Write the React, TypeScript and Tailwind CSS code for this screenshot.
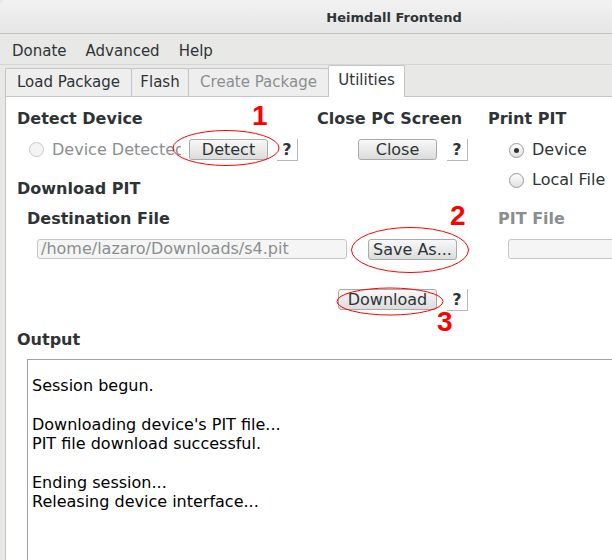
import type { ReactNode } from "react";

function Btn({ className, children }: { className: string; children: ReactNode }) {
  return (
    <div
      className={`flex h-[21px] items-center justify-center rounded-[3px] border border-[#a9a9a9] bg-linear-to-b from-[#f8f8f8] to-[#dcdcdc] text-[16px] leading-none text-[#2e3436] ${className}`}
    >
      {children}
    </div>
  );
}

function Help({ className }: { className: string }) {
  return (
    <div
      className={`flex h-[22px] w-[21px] items-center justify-center border-r border-b border-[#b8b8b8] bg-white text-[16px] font-bold leading-none text-[#2e3436] ${className}`}
    >
      ?
    </div>
  );
}

function Radio({ checked, disabled, className }: { checked?: boolean; disabled?: boolean; className: string }) {
  return (
    <span
      className={`flex h-[15px] w-[15px] shrink-0 items-center justify-center rounded-full border ${
        disabled ? "border-[#c8c8c8] bg-[#f4f4f4]" : "border-[#9a9a9a] bg-linear-to-b from-[#fdfdfd] to-[#e2e2e2]"
      } ${className}`}
    >
      {checked && <span className="h-[5px] w-[5px] rounded-full bg-[#2e3436]" />}
    </span>
  );
}

function Heading({ children, className = "" }: { children: ReactNode; className?: string }) {
  return <div className={`h-[20px] whitespace-nowrap text-[16px] font-bold leading-[20px] ${className}`}>{children}</div>;
}

const output = [
  "Session begun.",
  "",
  "Downloading device's PIT file...",
  "PIT file download successful.",
  "",
  "Ending session...",
  "Releasing device interface...",
];

export default function App() {
  return (
    <div className="relative h-[560px] w-[612px] overflow-hidden bg-[#e8e8e7] font-['DejaVu_Sans',sans-serif] text-[#2e3436]">
      <div className="flex w-[788px] flex-col">
        {/* Title bar */}
        <div className="flex h-[34px] items-center justify-center rounded-tl-[6px] border-b border-[#c2c2c2] bg-linear-to-b from-[#f2f2f2] to-[#e6e6e6] pt-[2px] text-[13px] font-bold">
          Heimdall Frontend
        </div>

        {/* Menu */}
        <div className="flex h-[31px] items-center gap-[19px] border-b border-[#d6d6d6] pt-[4px] pl-[12px] text-[15px]">
          <span>Donate</span>
          <span>Advanced</span>
          <span>Help</span>
        </div>

        {/* Tabs + panel */}
        <div className="ml-[5px] flex flex-col">
          <div className="flex h-[31px] items-end text-[15px]">
            <div className="flex h-[28px] w-[127px] items-center justify-center rounded-t-[2px] border border-b-0 border-[#c4c4c4] bg-[#eeeeee]">
              Load Package
            </div>
            <div className="-ml-px flex h-[28px] w-[58px] items-center justify-center rounded-t-[2px] border border-b-0 border-[#c4c4c4] bg-[#eeeeee]">
              Flash
            </div>
            <div className="-ml-px flex h-[28px] w-[141px] items-center justify-center rounded-t-[2px] border border-b-0 border-[#c4c4c4] bg-[#eeeeee] text-[#8b8e8f]">
              Create Package
            </div>
            <div className="relative z-10 -mb-px -ml-px flex h-[32px] w-[77px] items-center justify-center rounded-t-[2px] border border-b-0 border-[#c4c4c4] bg-white pb-[2px]">
              Utilities
            </div>
          </div>

          <div className="flex h-[470px] flex-col border-t border-l border-[#c4c4c4] bg-white pt-[12px] pl-[11px]">
            <div className="flex">
              {/* Left part */}
              <div className="flex w-[471px] flex-col">
                <div className="flex">
                  <div className="flex w-[300px] flex-col">
                    <Heading>Detect Device</Heading>
                    <div className="mt-[10px] flex h-[22px] items-start">
                      <Radio disabled className="mt-[3px] ml-[12px]" />
                      <span className="ml-[8px] w-[129px] overflow-hidden whitespace-nowrap text-[16px] leading-[21px] text-[#8b8e8f]">
                        Device Detected
                      </span>
                      <Btn className="ml-[8px] w-[79px]">Detect</Btn>
                      <Help className="ml-[9px]" />
                    </div>
                  </div>
                  <div className="flex w-[171px] flex-col">
                    <Heading>Close PC Screen</Heading>
                    <div className="mt-[10px] flex h-[22px] items-start">
                      <Btn className="ml-[41px] w-[79px]">Close</Btn>
                      <Help className="ml-[10px]" />
                    </div>
                  </div>
                </div>

                <Heading className="mt-[18px]">Download PIT</Heading>
                <Heading className="mt-[10px] ml-[10px]">Destination File</Heading>
                <div className="mt-[10px] flex h-[21px] items-start">
                  <div className="ml-[20px] flex h-[20px] w-[310px] items-center overflow-hidden whitespace-nowrap rounded-[3px] border border-[#c6c6c6] bg-[#f5f5f5] pl-[3px] text-[16px] text-[#8b8e8f]">
                    /home/lazaro/Downloads/s4.pit
                  </div>
                  <Btn className="ml-[21px] w-[89px]">Save As...</Btn>
                </div>
                <div className="mt-[29px] flex h-[22px] items-start">
                  <Btn className="ml-[321px] w-[99px]">Download</Btn>
                  <Help className="ml-[10px]" />
                </div>
              </div>

              {/* Right part */}
              <div className="flex flex-col">
                <Heading>Print PIT</Heading>
                <div className="mt-[10px] flex h-[22px] items-center">
                  <Radio checked className="ml-[21px]" />
                  <span className="ml-[8px] text-[16px]">Device</span>
                </div>
                <div className="mt-[8px] flex h-[22px] items-center">
                  <Radio className="ml-[21px]" />
                  <span className="ml-[8px] whitespace-nowrap text-[16px]">Local File</span>
                </div>
                <Heading className="mt-[18px] ml-[10px] text-[#8b8e8f]">PIT File</Heading>
                <div className="mt-[10px] ml-[20px] h-[20px] w-[200px] rounded-[3px] border border-[#c6c6c6] bg-[#f5f5f5]" />
              </div>
            </div>

            {/* Output */}
            <Heading className="mt-[19px]">Output</Heading>
            <div className="mt-[9px] ml-[10px] h-[400px] w-[740px] border-t border-l border-[#a3a3a3] bg-white pt-[16px] pl-[4px] text-[16px] leading-[19.4px] text-black">
              {output.map((line, i) => (
                <div key={i} className="h-[19.4px] whitespace-pre">
                  {line}
                </div>
              ))}
            </div>
          </div>
        </div>
      </div>

      {/* Red annotations */}
      <svg className="pointer-events-none absolute inset-0" width="612" height="560">
        <ellipse cx="226" cy="148" rx="53" ry="17.5" fill="none" stroke="#ff0000" strokeWidth="1" />
        <ellipse cx="410" cy="250" rx="58.5" ry="22.5" fill="none" stroke="#ff0000" strokeWidth="1" />
        <ellipse cx="390" cy="301.5" rx="53" ry="13.5" fill="none" stroke="#ff0000" strokeWidth="1" />
      </svg>
      <div className="absolute top-[102px] left-[252px] font-['Liberation_Sans',sans-serif] text-[28px] font-bold leading-[28px] text-[#ff0000]">1</div>
      <div className="absolute top-[202px] left-[450px] font-['Liberation_Sans',sans-serif] text-[28px] font-bold leading-[28px] text-[#ff0000]">2</div>
      <div className="absolute top-[308px] left-[437px] font-['Liberation_Sans',sans-serif] text-[28px] font-bold leading-[28px] text-[#ff0000]">3</div>
    </div>
  );
}
